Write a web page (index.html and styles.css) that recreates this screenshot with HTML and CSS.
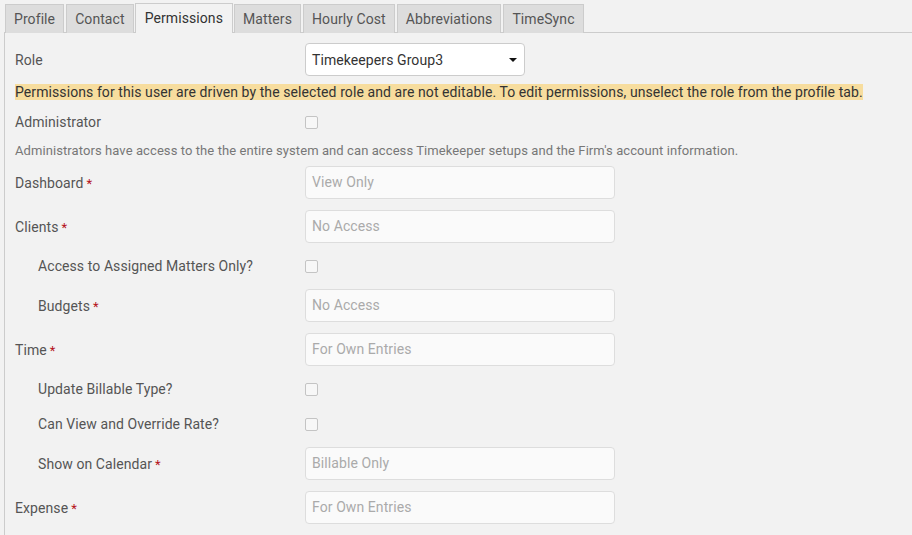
FILE: index.html
```html
<!DOCTYPE html>
<html lang="en">
<head>
  <meta charset="UTF-8">
  <title>Timekeeper Permissions</title>
  <link rel="stylesheet" href="styles.css">
</head>
<body>
  <div class="page">
    <ul class="tabs">
      <li class="tab">Profile</li>
      <li class="tab">Contact</li>
      <li class="tab active">Permissions</li>
      <li class="tab">Matters</li>
      <li class="tab">Hourly Cost</li>
      <li class="tab">Abbreviations</li>
      <li class="tab">TimeSync</li>
    </ul>

    <div class="panel">
      <div class="row role-row">
        <label class="label">Role</label>
        <div class="select">
          <span>Timekeepers Group3</span>
          <span class="caret"></span>
        </div>
      </div>

      <div class="notice"><span>Permissions for this user are driven by the selected role and are not editable. To edit permissions, unselect the role from the profile tab.</span></div>

      <div class="row check-row">
        <label class="label">Administrator</label>
        <span class="checkbox"></span>
      </div>
      <p class="help">Administrators have access to the the entire system and can access Timekeeper setups and the Firm's account information.</p>

      <div class="row">
        <label class="label">Dashboard<span class="req">*</span></label>
        <div class="field">View Only</div>
      </div>
      <div class="row">
        <label class="label">Clients<span class="req">*</span></label>
        <div class="field">No Access</div>
      </div>
      <div class="row check-row">
        <label class="label sub">Access to Assigned Matters Only?</label>
        <span class="checkbox"></span>
      </div>
      <div class="row">
        <label class="label sub">Budgets<span class="req">*</span></label>
        <div class="field">No Access</div>
      </div>
      <div class="row">
        <label class="label">Time<span class="req">*</span></label>
        <div class="field">For Own Entries</div>
      </div>
      <div class="row check-row">
        <label class="label sub">Update Billable Type?</label>
        <span class="checkbox"></span>
      </div>
      <div class="row check-row">
        <label class="label sub">Can View and Override Rate?</label>
        <span class="checkbox"></span>
      </div>
      <div class="row">
        <label class="label sub">Show on Calendar<span class="req">*</span></label>
        <div class="field">Billable Only</div>
      </div>
      <div class="row">
        <label class="label">Expense<span class="req">*</span></label>
        <div class="field">For Own Entries</div>
      </div>
    </div>
  </div>
</body>
</html>
```

FILE: styles.css
```css
body {
  margin: 0;
  font-family: Roboto, "Liberation Sans", sans-serif;
  font-size: 14px;
  letter-spacing: 0.085px;
  color: #555;
  background-color: #f2f2f2;
}

.page {
  padding: 3px 0 0 4px;
}

.tabs {
  display: flex;
  align-items: flex-end;
  gap: 2px;
  list-style: none;
  margin: 0;
  padding: 0 0 0 1px;
  height: 30px;
}

.tab {
  height: 28px;
  line-height: 28px;
  padding: 0 8px;
  background-color: #dddddd;
  border: 1px solid #cccccc;
  border-bottom: none;
  color: #555;
}

.tab.active {
  position: relative;
  z-index: 1;
  height: 29px;
  line-height: 29px;
  padding: 0 9px;
  margin: 0 -1px;
  background-color: #f2f2f2;
  color: #333;
}

.panel {
  border-top: 1px solid #cccccc;
  border-left: 1px solid #cccccc;
  margin-top: -1px;
  padding: 10px;
}

.row {
  display: flex;
  align-items: center;
  min-height: 33px;
  margin-bottom: 11px;
}

.check-row {
  min-height: 24px;
}

.label {
  width: 290px;
  flex-shrink: 0;
}

.label.sub {
  padding-left: 23px;
  width: 267px;
}

.req {
  color: #b5121b;
  font-size: 13px;
  margin-left: 3px;
}

.select {
  width: 205px;
  height: 31px;
  display: flex;
  align-items: center;
  justify-content: space-between;
  padding: 0 7px 0 6px;
  background: white;
  border: 1px solid #cccccc;
  border-radius: 4px;
  color: #333;
}

.caret {
  width: 0;
  height: 0;
  border-left: 4px solid transparent;
  border-right: 4px solid transparent;
  border-top: 4px solid #111;
}

.role-row {
  margin-bottom: 7px;
}

.notice {
  line-height: 18px;
  margin-bottom: 9px;
  color: #333;
}

.notice span {
  background-color: #f7dd9e;
}

.checkbox {
  width: 11px;
  height: 11px;
  border: 1px solid #c4c4c4;
  border-radius: 2px;
  background: #f7f7f7;
}

.help {
  margin: -3px 0 6px;
  font-size: 13px;
  line-height: 18px;
  color: #777;
}

.field {
  width: 296px;
  height: 31px;
  line-height: 31px;
  padding: 0 6px;
  background-color: #fafafa;
  border: 1px solid #dddddd;
  border-radius: 4px;
  color: #aaa;
}
```
